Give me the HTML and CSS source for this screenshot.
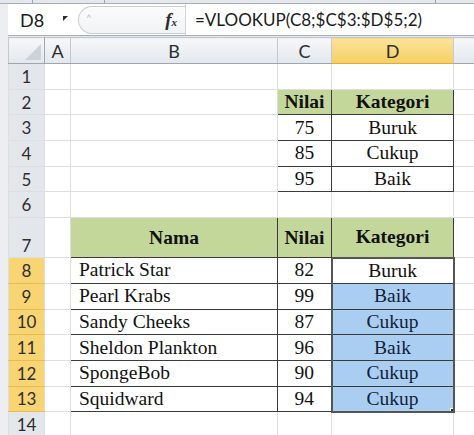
FILE: index.html
```html
<!DOCTYPE html>
<html>
<head>
<meta charset="utf-8">
<link rel="stylesheet" href="styles.css">
</head>
<body>
<div class="window">
  <div class="topstrip"><span class="tsep t1"></span><span class="tsep t2"></span><span class="tsep t3"></span></div>
  <div class="fbar">
    <div class="namebox"><span class="nbtext">D8</span><span class="nbarrow"></span></div>
    <div class="capsule"><span class="caret">^</span><span class="fx">f<span class="fxs">x</span></span></div>
    <div class="formula">=VLOOKUP(C8;$C$3:$D$5;2)</div>
  </div>
  <div class="gap"></div>
  <table class="sheet">
    <colgroup>
      <col class="c-rh"><col class="c-a"><col class="c-b"><col class="c-c"><col class="c-d"><col class="c-e">
    </colgroup>
    <tr class="colhead">
      <th class="corner"><span class="tri"></span></th>
      <th>A</th><th>B</th><th>C</th><th class="hsel">D</th><th></th>
    </tr>
    <tr class="row"><th class="rh">1</th><td></td><td></td><td></td><td></td><td></td></tr>
    <tr class="row"><th class="rh">2</th><td></td><td></td><td class="t hd">Nilai</td><td class="t hd">Kategori</td><td></td></tr>
    <tr class="row"><th class="rh">3</th><td></td><td></td><td class="t num">75</td><td class="t cat">Buruk</td><td></td></tr>
    <tr class="row"><th class="rh">4</th><td></td><td></td><td class="t num">85</td><td class="t cat">Cukup</td><td></td></tr>
    <tr class="row"><th class="rh">5</th><td></td><td></td><td class="t num">95</td><td class="t cat">Baik</td><td></td></tr>
    <tr class="row"><th class="rh">6</th><td></td><td></td><td></td><td></td><td></td></tr>
    <tr class="row tall"><th class="rh bottom">7</th><td></td><td class="t hd">Nama</td><td class="t hd">Nilai</td><td class="t hd">Kategori</td><td></td></tr>
    <tr class="row"><th class="rh rsel">8</th><td></td><td class="t name">Patrick Star</td><td class="t num">82</td><td class="t cat s s-top active">Buruk</td><td></td></tr>
    <tr class="row"><th class="rh rsel">9</th><td></td><td class="t name">Pearl Krabs</td><td class="t num">99</td><td class="t cat s blue">Baik</td><td></td></tr>
    <tr class="row"><th class="rh rsel">10</th><td></td><td class="t name">Sandy Cheeks</td><td class="t num">87</td><td class="t cat s blue">Cukup</td><td></td></tr>
    <tr class="row"><th class="rh rsel">11</th><td></td><td class="t name">Sheldon Plankton</td><td class="t num">96</td><td class="t cat s blue">Baik</td><td></td></tr>
    <tr class="row"><th class="rh rsel">12</th><td></td><td class="t name">SpongeBob</td><td class="t num">90</td><td class="t cat s blue">Cukup</td><td></td></tr>
    <tr class="row"><th class="rh rsel">13</th><td></td><td class="t name">Squidward</td><td class="t num">94</td><td class="t cat s s-bot blue"><span class="celltext">Cukup</span><span class="handle"></span></td><td></td></tr>
    <tr class="row"><th class="rh">14</th><td></td><td></td><td></td><td></td><td></td></tr>
  </table>
</div>
</body>
</html>
```

FILE: styles.css
```css
html, body {
  margin: 0;
  padding: 0;
  width: 474px;
  height: 435px;
  overflow: hidden;
  background: #eceef1;
}

.window {
  padding-left: 8px;
}

.topstrip {
  height: 3px;
  background: #e4e7eb;
  border-bottom: 1px solid #a7aeb7;
  margin-left: -8px;
  display: flex;
}

.tsep {
  display: block;
  width: 1px;
  height: 3px;
  background: #9ca3ac;
}
.t1 { margin-left: 32px; }
.t2 { margin-left: 71px; }
.t3 { margin-left: 330px; }

.fbar {
  height: 31px;
  background: #ffffff;
  display: flex;
  align-items: center;
  border-bottom: 1px solid #a9b1ba;
  font-family: Lato, "Liberation Sans", sans-serif;
  color: #1b1b1b;
}

.namebox {
  width: 67px;
  height: 31px;
  display: flex;
  align-items: center;
  box-sizing: border-box;
  padding-left: 12px;
  font-size: 18px;
}

.nbtext {
  flex: 1;
}

.nbarrow {
  width: 0;
  height: 0;
  border-left: 5px solid #2b2b2b;
  border-bottom: 5px solid transparent;
  margin-right: 7px;
  margin-top: -2px;
}

.capsule {
  margin-left: 3px;
  width: 107px;
  height: 28px;
  box-sizing: border-box;
  border: 1px solid #c8cdd3;
  border-right: none;
  border-radius: 14px 0 0 14px;
  display: flex;
  align-items: center;
  background: linear-gradient(#fbfbfc, #f1f3f5);
}

.caret {
  margin-left: 7px;
  font-size: 10px;
  color: #b7bcc2;
  flex: 1;
  margin-top: -6px;
}

.fx {
  font-family: "Liberation Serif", serif;
  font-style: italic;
  font-weight: bold;
  font-size: 19px;
  color: #2b2b2b;
  margin-right: 8px;
}

.fxs {
  font-size: 11px;
}

.formula {
  flex: 1;
  height: 31px;
  line-height: 31px;
  border-left: 1px solid #d3d7dc;
  padding-left: 9px;
  font-size: 17px;
  white-space: nowrap;
}

.gap {
  height: 1px;
  background: #e2e5e9;
}

.sheet {
  border-collapse: collapse;
  table-layout: fixed;
  width: 466px;
  background: #ffffff;
  font-family: "Liberation Serif", serif;
  font-size: 19.5px;
  color: #111111;
}

.c-rh { width: 36px; }
.c-a { width: 26px; }
.c-b { width: 207px; }
.c-c { width: 54px; }
.c-d { width: 122px; }
.c-e { width: 21px; }

.sheet td, .sheet th {
  padding: 0;
  border: 1px solid #dcdee0;
  overflow: hidden;
  white-space: nowrap;
}

.colhead th {
  height: 25px;
  background: linear-gradient(#f6f7f9, #e3e7ec);
  border: 1px solid #c3c9d0;
  border-bottom: 1px solid #9ea7b1;
  font-family: Lato, "Liberation Sans", sans-serif;
  font-weight: normal;
  font-size: 18px;
  color: #2e2e2e;
  text-align: center;
}

.colhead th.hsel {
  background: linear-gradient(#fbe39b, #f6cf63);
  border-bottom: 1px solid #e0a93c;
}

.colhead th.corner {
  text-align: right;
  vertical-align: bottom;
  border-right: 1px solid #9ea7b1;
}

.tri {
  display: inline-block;
  width: 0;
  height: 0;
  border-left: 16px solid transparent;
  border-bottom: 16px solid #cdd2d8;
  margin: 0 3px 3px 0;
  vertical-align: bottom;
}

.row { height: 25.7px; }
.row.tall { height: 40px; }

.rh {
  background: #e3e7ec;
  border: 1px solid #c5cbd2;
  border-right: 1px solid #9ea7b1;
  font-family: Lato, "Liberation Sans", sans-serif;
  font-weight: normal;
  font-size: 17px;
  color: #2e2e2e;
  text-align: center;
}

.rh.bottom {
  vertical-align: bottom;
  padding-bottom: 1px;
}

.rh.rsel {
  background: #f8d572;
  border-top: 1px solid #e9bc4f;
  border-bottom: 1px solid #e9bc4f;
}

.t {
  border: 1px solid #3b3b3b !important;
}

.hd {
  background: #c4d79b;
  font-weight: bold;
  text-align: center;
}

.num, .cat {
  text-align: center;
}

.name {
  padding-left: 8px !important;
}

.s {
  border-left: 2px solid #555555 !important;
  border-right: 2px solid #555555 !important;
}

.s-top {
  border-top: 2px solid #555555 !important;
}

.s-bot {
  border-bottom: 2px solid #555555 !important;
  position: relative;
}

.blue {
  background: #a9cef2;
  color: #132238;
}

.handle {
  position: absolute;
  right: -4px;
  bottom: -4px;
  width: 5px;
  height: 5px;
  background: #333333;
  border: 1px solid #ffffff;
}
```
